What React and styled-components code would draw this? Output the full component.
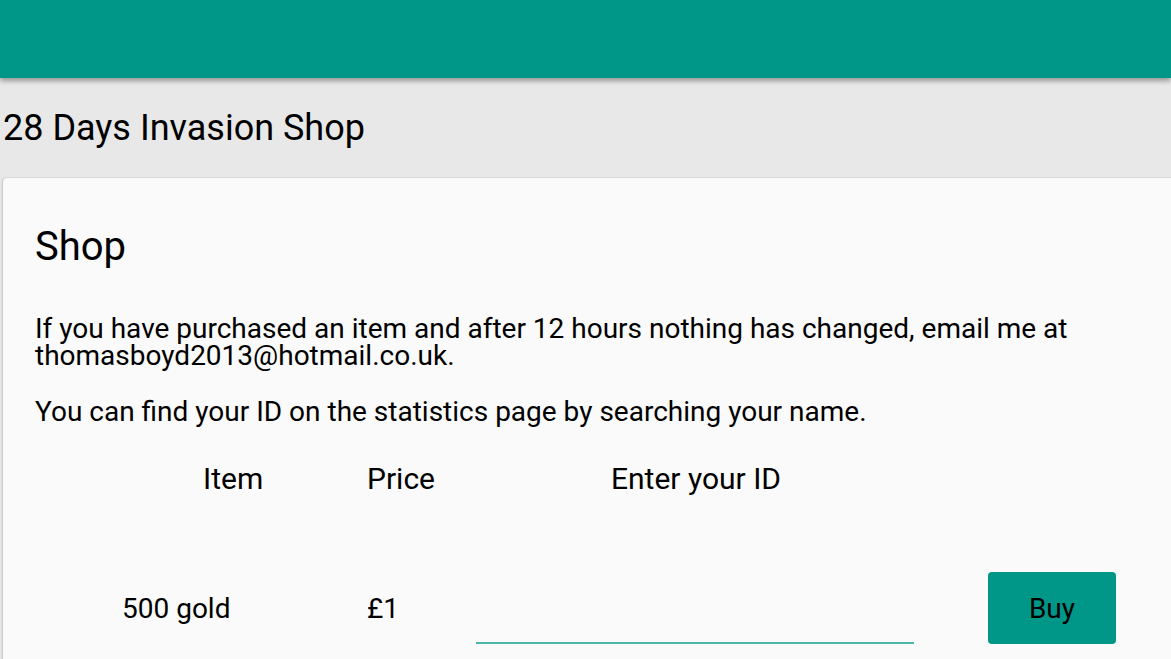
import React from "react";
import styled, { createGlobalStyle } from "styled-components";

const Global = createGlobalStyle`
  html, body { margin: 0; padding: 0; }
  body {
    background: #e8e8e8;
    font-family: Roboto, "Noto Sans", "Liberation Sans", sans-serif;
    color: #000;
    overflow: hidden;
  }
`;

const Page = styled.div`
  min-height: 659px;
  display: flex;
  flex-direction: column;
`;

const Toolbar = styled.header`
  height: 78px;
  background: #009688;
  box-shadow: 0 3px 5px rgba(0, 0, 0, 0.35);
  position: relative;
  z-index: 2;
`;

const TitleBar = styled.div`
  padding: 29px 3px 29px;
`;

const Title = styled.h1`
  margin: 0;
  font-size: 36px;
  font-weight: 400;
  line-height: normal;
`;

const Card = styled.main`
  margin: 0 -40px 0 3px;
  padding: 0 32px 40px;
  background: #fafafa;
  border-radius: 4px 4px 0 0;
  box-shadow: 0 1px 3px rgba(0, 0, 0, 0.25), 0 0 1px rgba(0, 0, 0, 0.3);
  flex: 1;
`;

const Heading = styled.h2`
  margin: 45px 0 0;
  font-size: 40px;
  font-weight: 400;
  line-height: normal;
`;

const Para = styled.p`
  margin: ${(p) => p.$top}px 0 0;
  font-size: 28px;
  line-height: 27px;
  max-width: 1100px;
`;

const Row = styled.div`
  display: grid;
  grid-template-columns: 332px 109px 438px 260px;
  align-items: center;
  margin-top: ${(p) => p.$top}px;
  height: ${(p) => p.$height}px;
`;

const HeadCell = styled.div`
  font-size: 30px;
  line-height: normal;
  padding-left: ${(p) => p.$indent || 0}px;
`;

const Cell = styled.div`
  font-size: 28px;
  line-height: normal;
  padding-left: ${(p) => p.$indent || 0}px;
`;

const InputCell = styled.div`
  align-self: stretch;
  display: flex;
  align-items: flex-end;
`;

const IdInput = styled.input`
  width: 100%;
  height: 40px;
  border: none;
  border-bottom: 2px solid #4db6ac;
  background: transparent;
  outline: none;
  font-family: inherit;
  font-size: 24px;
  padding: 0;
`;

const BuyButton = styled.button`
  margin-left: 74px;
  width: 128px;
  height: 72px;
  border: none;
  border-radius: 4px;
  background: #009688;
  color: #000;
  font-family: inherit;
  font-size: 28px;
  cursor: pointer;
`;

export default function App() {
  return (
    <Page>
      <Global />
      <Toolbar />
      <TitleBar>
        <Title>28 Days Invasion Shop</Title>
      </TitleBar>
      <Card>
        <Heading>Shop</Heading>
        <Para $top={45}>
          If you have purchased an item and after 12 hours nothing has changed, email me at
          thomasboyd2013@hotmail.co.uk.
        </Para>
        <Para $top={29}>
          You can find your ID on the statistics page by searching your name.
        </Para>
        <Row $top={36} $height={35}>
          <HeadCell $indent={168}>Item</HeadCell>
          <HeadCell>Price</HeadCell>
          <HeadCell $indent={135}>Enter your ID</HeadCell>
          <div />
        </Row>
        <Row $top={76} $height={72}>
          <Cell $indent={87}>500 gold</Cell>
          <Cell>£1</Cell>
          <InputCell>
            <IdInput type="text" aria-label="Enter your ID" />
          </InputCell>
          <div>
            <BuyButton>Buy</BuyButton>
          </div>
        </Row>
      </Card>
    </Page>
  );
}
